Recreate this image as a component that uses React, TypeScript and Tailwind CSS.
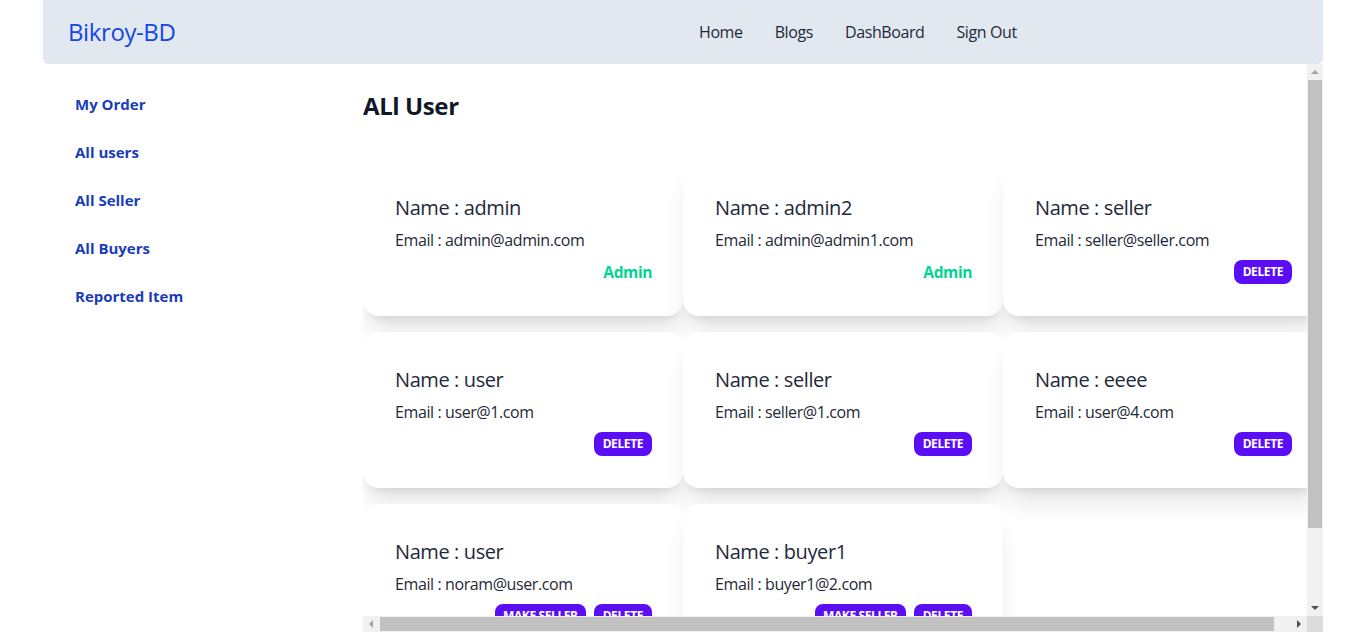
import React from 'react';

type User = { name: string; email: string; role: 'admin' | 'seller' | 'buyer' };

const users: User[] = [
  { name: 'admin', email: 'admin@admin.com', role: 'admin' },
  { name: 'admin2', email: 'admin@admin1.com', role: 'admin' },
  { name: 'seller', email: 'seller@seller.com', role: 'seller' },
  { name: 'user', email: 'user@1.com', role: 'seller' },
  { name: 'seller', email: 'seller@1.com', role: 'seller' },
  { name: 'eeee', email: 'user@4.com', role: 'seller' },
  { name: 'user', email: 'noram@user.com', role: 'buyer' },
  { name: 'buyer1', email: 'buyer1@2.com', role: 'buyer' },
];

const sideLinks = ['My Order', 'All users', 'All Seller', 'All Buyers', 'Reported Item'];
const navLinks = ['Home', 'Blogs', 'DashBoard', 'Sign Out'];

function UserCard({ user }: { user: User }) {
  return (
    <div className="bg-white rounded-2xl shadow-xl h-[156px] pl-8 pr-[31px] py-8 flex flex-col gap-2">
      <h2 className="text-[20px] leading-7 pt-[2px] -mb-[2px] font-medium text-gray-800">Name : {user.name}</h2>
      <p className="text-base leading-6 text-gray-800">Email : {user.email}</p>
      <div className="flex justify-end gap-2">
        {user.role === 'admin' && (
          <span className="text-[15.5px] leading-6 font-bold text-emerald-400">Admin</span>
        )}
        {user.role === 'buyer' && (
          <button className="h-6 px-2 rounded-lg bg-[#5b0ef6] text-white text-xs font-bold">MAKE SELLER</button>
        )}
        {user.role !== 'admin' && (
          <button className="h-6 px-[9px] rounded-lg bg-[#5b0ef6] text-white text-xs font-bold">DELETE</button>
        )}
      </div>
    </div>
  );
}

// the page scrollbars are drawn, since the headless browser paints none
function Arrow({ dir, light }: { dir: 'up' | 'down' | 'left' | 'right'; light?: boolean }) {
  const pts = {
    up: '4,10 8,6 12,10',
    down: '4,6 8,10 12,6',
    left: '10,4 6,8 10,12',
    right: '6,4 10,8 6,12',
  }[dir];
  return (
    <svg width="16" height="16" viewBox="0 0 16 16" className="shrink-0">
      <polygon points={pts} fill={light ? '#a3a3a3' : '#505050'} />
    </svg>
  );
}

export default function App() {
  return (
    <div
      className="max-w-[1280px] mx-auto h-[632px] flex flex-col bg-white tracking-[-0.4px]"
      style={{ fontFamily: '"Open Sans", "Noto Sans", sans-serif' }}
    >
      <nav className="h-16 shrink-0 bg-slate-200 rounded-b-md flex items-center">
        <div className="w-1/2 pl-[25px]">
          <a className="text-2xl text-blue-700">Bikroy-BD</a>
        </div>
        <ul className="flex items-center">
          {navLinks.map((l) => (
            <li key={l} className="px-4 text-base text-gray-800">{l}</li>
          ))}
        </ul>
      </nav>
      <div className="flex flex-1 min-h-0">
        <aside className="w-80 shrink-0 p-4">
          <ul>
            {sideLinks.map((l) => (
              <li key={l} className="px-4 py-3 text-[15px] leading-6 font-bold tracking-normal text-blue-800">{l}</li>
            ))}
          </ul>
        </aside>
        <main className="flex-1 min-w-0 grid grid-cols-[1fr_16px] grid-rows-[1fr_16px]">
          <div className="overflow-hidden">
            <h1 className="mt-[26px] text-2xl leading-8 font-bold text-gray-900">ALl User</h1>
            <div className="mt-[38px] grid grid-cols-[320px_320px_320px] gap-y-4 pb-16">
              {users.map((u, i) => (
                <UserCard key={i} user={u} />
              ))}
            </div>
          </div>
          <div className="bg-[#f1f1f1] flex flex-col items-center">
            <Arrow dir="up" light />
            <div className="w-[14px] h-[448px] bg-[#c1c1c1]" />
            <div className="flex-1" />
            <Arrow dir="down" />
          </div>
          <div className="bg-[#f1f1f1] flex items-center">
            <Arrow dir="left" light />
            <div className="h-[14px] w-[894px] ml-[1px] bg-[#c1c1c1]" />
            <div className="flex-1" />
            <Arrow dir="right" />
          </div>
          <div className="bg-[#dcdcdc]" />
        </main>
      </div>
    </div>
  );
}
